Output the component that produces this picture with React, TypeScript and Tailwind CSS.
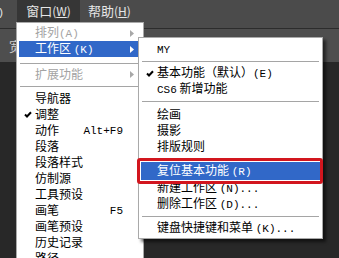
import React from 'react'

const CJK = "font-['Noto_Sans_CJK_SC','Noto_Sans',sans-serif]"

// latin bits in the menu labels render narrower, like the bitmap font in the shot
const L = ({ children }: { children: React.ReactNode }) => (
  <span className="font-['Liberation_Mono',monospace] text-[11px]">{children}</span>
)

const Check = ({ className = '' }: { className?: string }) => (
  <svg width="8" height="7" viewBox="0 0 8 7" className={className}>
    <polyline points="1,3.5 3,5.5 7,1.2" fill="none" stroke="currentColor" strokeWidth="2" />
  </svg>
)

const Arrow = ({ color }: { color: string }) => (
  <svg width="4" height="7" viewBox="0 0 4 7">
    <path d="M0 0 L4 3.5 L0 7Z" fill={color} />
  </svg>
)

interface ItemProps {
  label: React.ReactNode
  check?: boolean
  disabled?: boolean
  active?: boolean
  shortcut?: React.ReactNode
  arrow?: boolean
  tall?: boolean
}

const Item: React.FC<ItemProps> = ({ label, check, disabled, active, shortcut, arrow, tall }) => {
  const text = active ? 'text-white' : disabled ? 'text-[#a3a3a3]' : 'text-black'
  return (
    <div
      className={`mx-[2px] flex items-center ${tall ? 'h-[18px]' : 'h-[16px]'} ${active ? 'bg-[#3168c8]' : ''} ${text}`}
    >
      <div className="w-[16px] flex justify-center pl-[2px]">{check && <Check />}</div>
      <div className="flex-1 whitespace-nowrap text-[12px] leading-[16px]">{label}</div>
      {shortcut && <div className="pr-[18px] whitespace-nowrap text-[12px] leading-[16px]">{shortcut}</div>}
      {arrow && (
        <div className="pr-[7px] flex items-center">
          <Arrow color={active ? '#ffffff' : '#a8a8a8'} />
        </div>
      )}
    </div>
  )
}

const Sep = ({ h, pt }: { h: string; pt: string }) => (
  <div className={`${h} ${pt} mx-[3px]`}>
    <div className="h-px bg-[#a5a5a5]" />
  </div>
)

export default function App() {
  return (
    <div className={`relative w-[339px] h-[258px] overflow-hidden bg-[#282828] ${CJK}`}>
      {/* menu bar */}
      <div className="h-[28px] bg-[#4b4b4b] flex items-start text-[13px] text-[#e6e6e6]">
        <div className="w-[17px] h-[22px] overflow-hidden flex justify-end items-center">
          <span className="pr-[13px] whitespace-nowrap">
            <L>(V)</L>
          </span>
        </div>
        <div className="w-[63px] h-[22px] bg-[#363636] flex items-center justify-center whitespace-nowrap">
          窗口<span className="text-[12px]">(<span className="underline">W</span>)</span>
        </div>
        <div className="ml-[8px] h-[22px] flex items-center whitespace-nowrap">
          帮助<span className="text-[12px]">(<span className="underline">H</span>)</span>
        </div>
      </div>
      <div className="h-px bg-[#2c2c2c]" />
      {/* tool options bar */}
      <div className="h-[33px] bg-[#4e4e4e] flex items-center pl-[9px] text-[13px] text-[#cfcfcf]">
        宽
      </div>

      {/* window menu */}
      <div className="absolute left-[16px] top-[22px] w-[128px] h-[260px] bg-white border border-[#a9a9a9] pt-[2px]">
        <Item label={<>排列<L>(A)</L></>} disabled arrow />
        <Item label={<>工作区 <L>(K)</L></>} active arrow />
        <Sep h="h-[9px]" pt="pt-[6px]" />
        <Item label="扩展功能" disabled arrow />
        <Sep h="h-[8px]" pt="pt-[4px]" />
        <Item label="导航器" />
        <Item label="调整" check />
        <Item label="动作" shortcut={<L>Alt+F9</L>} />
        <Item label="段落" />
        <Item label="段落样式" />
        <Item label="仿制源" />
        <Item label="工具预设" />
        <Item label="画笔" shortcut={<L>F5</L>} />
        <Item label="画笔预设" />
        <Item label="历史记录" />
        <Item label="路径" />
      </div>

      {/* workspace submenu */}
      <div className="absolute left-[138px] top-[37px] w-[185px] h-[202px] bg-white border border-[#a9a9a9] pt-[3px] shadow-[3px_3px_3px_rgba(0,0,0,0.55)]">
        <Item label={<L>MY</L>} />
        <Sep h="h-[8px]" pt="pt-[4px]" />
        <Item label={<>基本功能（默认）<L>(E)</L></>} check />
        <Item label={<><L>CS6</L> 新增功能</>} />
        <Sep h="h-[9px]" pt="pt-[4px]" />
        <Item label="绘画" />
        <Item label="摄影" />
        <Item label="排版规则" />
        <Sep h="h-[8px]" pt="pt-[4px]" />
        <Item label={<>复位基本功能 <L>(R)</L></>} active tall />
        <Item label={<>新建工作区 <L>(N)...</L></>} />
        <Item label={<>删除工作区 <L>(D)...</L></>} />
        <Sep h="h-[8px]" pt="pt-[4px]" />
        <Item label={<>键盘快捷键和菜单 <L>(K)...</L></>} />
      </div>

      {/* red annotation box */}
      <div className="absolute left-[137px] top-[158px] w-[186px] h-[26px] border-[3px] border-[#d2161e] rounded-[3px]" />
    </div>
  )
}
